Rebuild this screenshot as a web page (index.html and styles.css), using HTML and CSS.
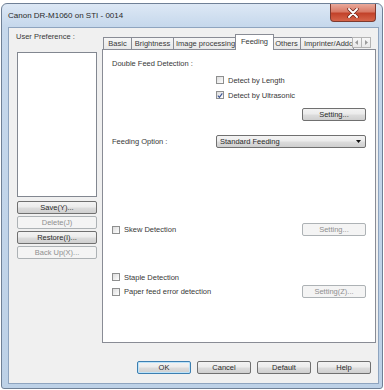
FILE: index.html
```html
<!DOCTYPE html>
<html lang="en">
<head>
    <meta charset="UTF-8">
    <title>Canon DR-M1060 on STI - 0014</title>
    <link rel="stylesheet" href="styles.css">
</head>
<body>
    <div class="window">
        <div class="titlebar">
            <span class="title">Canon DR-M1060 on STI - 0014</span>
            <div class="close-btn">
                <svg width="12" height="10" viewBox="0 0 12 10">
                    <path d="M2 1 L10 9 M10 1 L2 9" stroke="#6d2419" stroke-width="3.4" stroke-linecap="round"/>
                    <path d="M2 1 L10 9 M10 1 L2 9" stroke="#fff" stroke-width="1.9" stroke-linecap="round"/>
                </svg>
            </div>
        </div>

        <div class="client">
            <div class="main">
                <!-- preferences -->
                <div class="left">
                    <div class="label">User Preference :</div>
                    <div class="listbox"></div>
                    <div class="btn side-btn">Save(Y)...</div>
                    <div class="btn side-btn disabled">Delete(J)</div>
                    <div class="btn side-btn">Restore(I)...</div>
                    <div class="btn side-btn disabled">Back Up(X)...</div>
                </div>

                <div class="right">
                    <div class="tabs">
                        <div class="tab w-basic">Basic</div>
                        <div class="tab w-bright">Brightness</div>
                        <div class="tab w-image">Image processing</div>
                        <div class="tab active">Feeding</div>
                        <div class="tab w-others">Others</div>
                        <div class="tab w-imprint">Imprinter/Addo</div>
                        <div class="tab-arrows">
                            <div class="arrow-box">
                                <svg width="4" height="5" viewBox="0 0 4 5"><path d="M3 0 L0 2.5 L3 5 Z" fill="#9a9a9a"/></svg>
                            </div>
                            <div class="arrow-box">
                                <svg width="4" height="5" viewBox="0 0 4 5"><path d="M1 0 L4 2.5 L1 5 Z" fill="#9a9a9a"/></svg>
                            </div>
                        </div>
                    </div>

                    <div class="panel">
                        <div class="row heading">Double Feed Detection :</div>

                        <div class="row check-row indent r-length">
                            <span class="checkbox"></span>
                            <span>Detect by Length</span>
                        </div>
                        <div class="row check-row indent r-ultra">
                            <span class="checkbox">
                                <svg width="7" height="7" viewBox="0 0 7 7"><path d="M1 3.6 L2.8 5.6 L6.2 1" stroke="#3d5594" stroke-width="1.4" fill="none"/></svg>
                            </span>
                            <span>Detect by Ultrasonic</span>
                        </div>

                        <div class="row btn-row r-setting">
                            <div class="btn panel-btn">Setting...</div>
                        </div>

                        <div class="row r-feeding">
                            <span class="option-label">Feeding Option :</span>
                            <div class="combo">
                                <span>Standard Feeding</span>
                                <svg width="5" height="3" viewBox="0 0 5 3"><path d="M0 0 L5 0 L2.5 3 Z" fill="#111"/></svg>
                            </div>
                        </div>

                        <div class="row split r-skew">
                            <div class="check-row">
                                <span class="checkbox"></span>
                                <span>Skew Detection</span>
                            </div>
                            <div class="btn panel-btn disabled">Setting...</div>
                        </div>

                        <div class="row check-row r-staple">
                            <span class="checkbox"></span>
                            <span>Staple Detection</span>
                        </div>

                        <div class="row split r-paper">
                            <div class="check-row">
                                <span class="checkbox"></span>
                                <span>Paper feed error detection</span>
                            </div>
                            <div class="btn panel-btn disabled">Setting(Z)...</div>
                        </div>
                    </div>
                </div>
            </div>

            <div class="footer">
                <div class="btn footer-btn default">OK</div>
                <div class="btn footer-btn">Cancel</div>
                <div class="btn footer-btn">Default</div>
                <div class="btn footer-btn">Help</div>
            </div>
        </div>
    </div>
</body>
</html>
```
FILE: styles.css
```css
* {
    box-sizing: border-box;
}

body {
    margin: 0;
    background: #fff;
    font-family: "Liberation Sans", Arial, sans-serif;
    font-size: 7.5px;
    color: #383838;
}

.window {
    margin: 3px 1px 1px 1px;
    width: 382px;
    height: 386px;
    border: 1px solid #6f8096;
    border-radius: 6px 6px 3px 3px;
    background: linear-gradient(180deg, #dde8f5 0%, #c6d8ec 22px, #bdd1e7 100%);
    padding: 0 3px 4px 6px;
    display: flex;
    flex-direction: column;
}

.titlebar {
    height: 23px;
    display: flex;
    align-items: center;
}

.title {
    font-size: 8px;
    color: #2a2a2a;
}

.close-btn {
    margin-left: auto;
    margin-right: 3px;
    align-self: flex-start;
    width: 46px;
    height: 18px;
    border: 1px solid #7d3a2f;
    border-top: none;
    border-radius: 0 0 4px 4px;
    background: linear-gradient(180deg, #e9a99b 0%, #d97a66 45%, #c2422a 55%, #d6654a 100%);
    display: flex;
    align-items: center;
    justify-content: center;
}

.client {
    flex: 1;
    border: 1px solid #8ea4bf;
    background: #f0f0f0;
    display: flex;
    flex-direction: column;
}

.main {
    flex: 1;
    display: flex;
}

.left {
    width: 93px;
    padding: 4px 0 0 7px;
}

.label {
    height: 10px;
    line-height: 10px;
}

.listbox {
    width: 80px;
    height: 145px;
    margin: 10px 0 0 1px;
    border: 1px solid #828790;
    background: #fff;
}

/* buttons */
.btn {
    height: 13px;
    border: 1px solid #707070;
    border-radius: 2px;
    background: linear-gradient(180deg, #f3f3f3 0%, #ebebeb 48%, #dddddd 52%, #cfcfcf 100%);
    display: flex;
    align-items: center;
    justify-content: center;
    color: #2a2a2a;
}

.btn.disabled {
    border-color: #adb2b5;
    background: #f4f4f4;
    color: #8f8f8f;
}

.side-btn {
    width: 80px;
    margin: 2px 0 0 1px;
}

.listbox + .side-btn {
    margin-top: 4px;
}

.right {
    flex: 1;
    padding-top: 6px;
    margin-right: 2px;
    display: flex;
    flex-direction: column;
}

.tabs {
    height: 15px;
    display: flex;
    align-items: flex-end;
    padding-left: 1px;
}

.tab {
    height: 12px;
    border: 1px solid #898c95;
    border-bottom: none;
    margin-right: -1px;
    background: linear-gradient(180deg, #f6f6f6 0%, #e8e8e8 100%);
    display: flex;
    align-items: center;
    justify-content: center;
    white-space: nowrap;
    overflow: hidden;
}

.tab.active {
    height: 16px;
    width: 39px;
    margin: 0 -2px -1px -2px;
    background: #fff;
    position: relative;
    z-index: 1;
    align-items: flex-start;
    padding-top: 2px;
}

.w-basic { width: 29px; }
.w-bright { width: 43px; }
.w-image { width: 65px; }
.w-others { width: 29px; }
.w-imprint { width: 54px; justify-content: flex-start; padding-left: 3px; }

.tab-arrows {
    display: flex;
    margin-left: -1px;
    margin-bottom: 1px;
    position: relative;
    z-index: 2;
}

.arrow-box {
    width: 10px;
    height: 11px;
    border: 1px solid #b4b4b4;
    background: linear-gradient(180deg, #f7f7f7, #e9e9e9);
    display: flex;
    align-items: center;
    justify-content: center;
}

.arrow-box + .arrow-box {
    margin-left: -1px;
}

.panel {
    height: 294px;
    border: 1px solid #898c95;
    background: #fff;
    padding: 0 9px;
}

.row {
    display: flex;
    align-items: center;
}

.heading {
    margin-top: 7px;
    height: 12px;
}

.check-row {
    display: flex;
    align-items: center;
    gap: 4px;
    height: 12px;
}

.indent {
    margin-left: 104px;
}

.checkbox {
    width: 8px;
    height: 8px;
    border: 1px solid #8e8f8f;
    background: linear-gradient(135deg, #dcdcdc 0%, #f4f4f4 70%, #fff 100%);
    display: flex;
    align-items: center;
    justify-content: center;
}

.r-length { margin-top: 5px; }
.r-ultra { margin-top: 3px; }

.btn-row {
    justify-content: flex-end;
}

.r-setting { margin-top: 7px; }

.panel-btn {
    width: 64px;
}

.r-feeding {
    margin-top: 14px;
    height: 13px;
}

.option-label {
    width: 104px;
}

.combo {
    flex: 1;
    height: 13px;
    border: 1px solid #707070;
    border-radius: 2px;
    background: linear-gradient(180deg, #f3f3f3 0%, #ebebeb 48%, #dddddd 52%, #cfcfcf 100%);
    display: flex;
    align-items: center;
    justify-content: space-between;
    padding: 0 4px 0 3px;
    color: #2a2a2a;
}

.split {
    justify-content: space-between;
    height: 13px;
}

.r-skew { margin-top: 75px; }
.r-staple { margin-top: 35px; }
.r-paper { margin-top: 2px; }

.footer {
    display: flex;
    justify-content: flex-end;
    gap: 6px;
    margin-top: 18px;
    padding: 0 7px 9px 0;
}

.footer-btn {
    width: 54px;
}

.footer-btn.default {
    border-color: #3c7fb1;
    box-shadow: inset 0 0 0 1px #bde3f9;
}
```
